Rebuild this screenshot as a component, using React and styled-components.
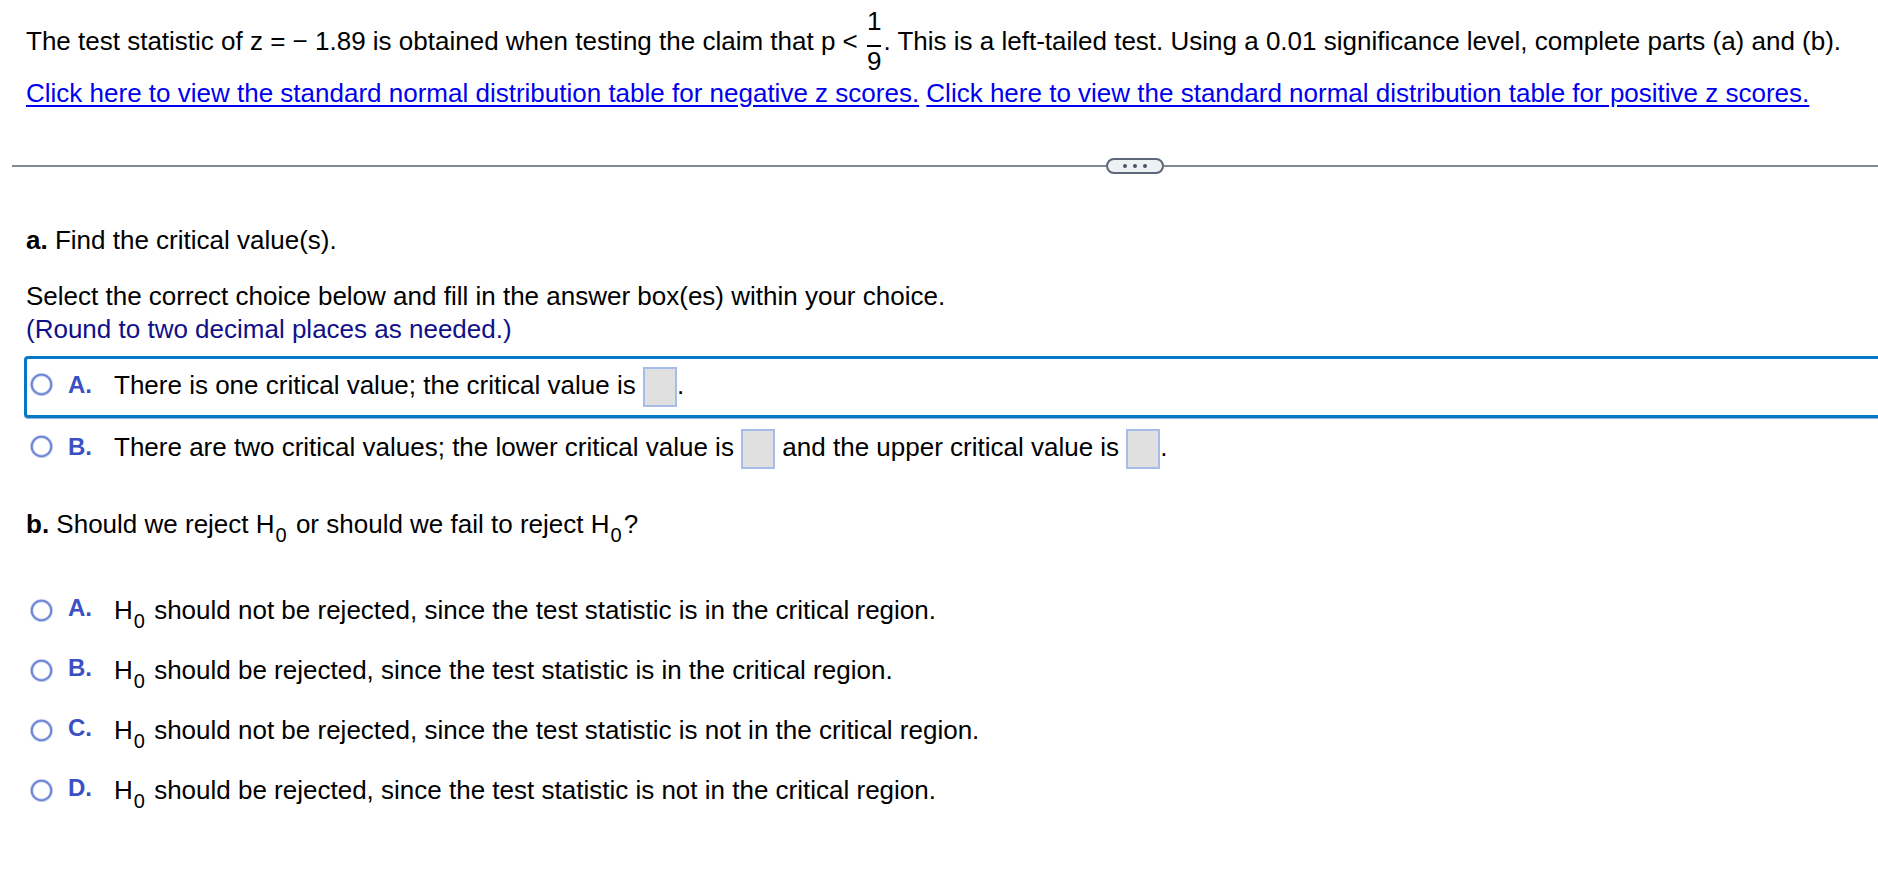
import React from 'react'
import styled, { createGlobalStyle } from 'styled-components'

const GlobalStyle = createGlobalStyle`
  html, body {
    margin: 0;
    padding: 0;
    background: #ffffff;
  }
  body {
    overflow: hidden;
    font-family: "Liberation Sans", Arial, Helvetica, sans-serif;
  }
`

const Page = styled.div`
  width: 1878px;
  height: 876px;
  box-sizing: border-box;
  padding: 12px 0 0 26px;
  font-size: 26px;
  color: #000;
  overflow: hidden;
`

const Para = styled.p`
  margin: ${p => p.$mt || 0}px 0 0 0;
  line-height: ${p => p.$lh || 32}px;
  white-space: nowrap;
`

const Frac = styled.span`
  display: inline-flex;
  flex-direction: column;
  align-items: center;
  vertical-align: 20px;
  padding: 0 2px;
`

const Num = styled.span`
  line-height: 19px;
`

const Bar = styled.span`
  align-self: stretch;
  height: 2px;
  background: #000;
  margin: 14px 0 5px;
`

const Link = styled.a`
  color: #0000ee;
  text-decoration: underline;
  text-underline-offset: 3px;
  cursor: pointer;
`

const Separator = styled.div`
  display: flex;
  align-items: center;
  height: 16px;
  margin: 49px 0 0 -14px;
`

const Rule = styled.div`
  height: 2px;
  background: #7f8997;
  flex: ${p => (p.$grow ? 1 : '0 0 1094px')};
`

const Pill = styled.button`
  width: 58px;
  height: 16px;
  box-sizing: border-box;
  border: 2px solid #5c6777;
  border-radius: 8px;
  background: #eef1f4;
  padding: 0;
  display: flex;
  align-items: center;
  justify-content: center;
  gap: 6px;
`

const Dot = styled.span`
  width: 4px;
  height: 4px;
  border-radius: 50%;
  background: #4a5462;
`

const Bold = styled.b`
  font-weight: bold;
`

const Navy = styled.span`
  color: #10108a;
`

const Options = styled.div`
  margin: ${p => p.$mt}px 0 0 -2px;
`

const Row = styled.div`
  display: flex;
  align-items: center;
  height: ${p => p.$h}px;
  box-sizing: border-box;
  border: 3px solid ${p => (p.$selected ? '#0778c8' : 'transparent')};
  border-right: none;
  border-radius: 4px 0 0 4px;
  padding-left: 3px;
  box-shadow: ${p => (p.$selected ? '0 1px 0 #8fb6dc' : 'none')};
`

const RadioWrap = styled.span`
  display: flex;
  width: 23px;
  height: 23px;
  margin-bottom: ${p => p.$lift || 0}px;
`

const Letter = styled.span`
  width: 46px;
  margin-left: 15px;
  margin-bottom: 5px;
  font-size: 24px;
  line-height: 24px;
  font-weight: bold;
  color: #3b50c4;
`

const Text = styled.span`
  line-height: 32px;
  white-space: nowrap;
`

const AnswerBox = styled.span`
  display: inline-block;
  width: 30px;
  height: 36px;
  background: #e0e0e0;
  border: 2px solid #a6bde9;
  vertical-align: middle;
`

const Sub = styled.sub`
  font-size: 20px;
  line-height: 0;
  vertical-align: -9px;
  margin: 0 2px 0 1px;
`

function Radio({ lift }) {
  return (
    <RadioWrap $lift={lift}>
      <svg width="23" height="23" viewBox="0 0 23 23">
        <circle cx="11.5" cy="11.5" r="9.8" fill="#fff" stroke="#c8d3f1" strokeWidth="3.4" />
        <circle cx="11.5" cy="11.5" r="9.8" fill="none" stroke="#6c84d4" strokeWidth="1.8" />
      </svg>
    </RadioWrap>
  )
}

function Choice({ letter, selected, height, lift, children }) {
  return (
    <Row $selected={selected} $h={height}>
      <Radio lift={lift} />
      <Letter>{letter}</Letter>
      <Text>{children}</Text>
    </Row>
  )
}

const H0 = () => (
  <>
    H<Sub>0</Sub>
  </>
)

export default function App() {
  return (
    <>
      <GlobalStyle />
      <Page>
        <Para>
          The test statistic of z = − 1.89 is obtained when testing the claim that p &lt;{' '}
          <Frac>
            <Num>1</Num>
            <Bar />
            <Num>9</Num>
          </Frac>
          . This is a left-tailed test. Using a 0.01 significance level, complete parts (a) and (b).
        </Para>
        <Para $mt={6}>
          <Link>Click here to view the standard normal distribution table for negative z scores.</Link>{' '}
          <Link>Click here to view the standard normal distribution table for positive z scores.</Link>
        </Para>

        <Separator>
          <Rule />
          <Pill aria-label="more">
            <Dot />
            <Dot />
            <Dot />
          </Pill>
          <Rule $grow />
        </Separator>

        <Para $mt={50}>
          <Bold>a.</Bold> Find the critical value(s).
        </Para>
        <Para $mt={24} $lh={33}>
          Select the correct choice below and fill in the answer box(es) within your choice.
          <br />
          <Navy>(Round to two decimal places as needed.)</Navy>
        </Para>

        <Options $mt={10}>
          <Choice letter="A." selected height={62} lift={6}>
            There is one critical value; the critical value is <AnswerBox />.
          </Choice>
          <Choice letter="B." height={62} lift={6}>
            There are two critical values; the lower critical value is <AnswerBox /> and the upper critical value
            is <AnswerBox />.
          </Choice>
        </Options>

        <Para $mt={28}>
          <Bold>b.</Bold> Should we reject <H0 /> or should we fail to reject <H0 />?
        </Para>

        <Options $mt={40}>
          <Choice letter="A." height={60}>
            <H0 /> should not be rejected, since the test statistic is in the critical region.
          </Choice>
          <Choice letter="B." height={60}>
            <H0 /> should be rejected, since the test statistic is in the critical region.
          </Choice>
          <Choice letter="C." height={60}>
            <H0 /> should not be rejected, since the test statistic is not in the critical region.
          </Choice>
          <Choice letter="D." height={60}>
            <H0 /> should be rejected, since the test statistic is not in the critical region.
          </Choice>
        </Options>
      </Page>
    </>
  )
}
